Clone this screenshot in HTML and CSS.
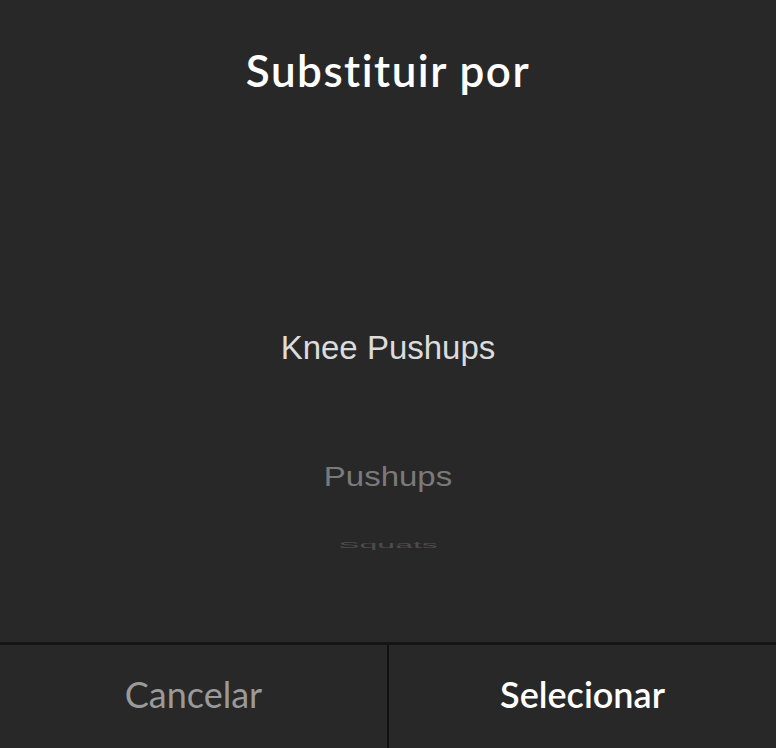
FILE: index.html
```html
<!DOCTYPE html>
<html lang="en">
<head>
    <meta charset="UTF-8">
    <title>Substituir por</title>
    <link rel="stylesheet" href="styles.css">
</head>
<body>
    <div class="sheet">
        <h1 class="title">Substituir por</h1>

        <!-- wheel picker -->
        <div class="picker">
            <div class="item selected">Knee Pushups</div>
            <div class="item next">Pushups</div>
            <div class="item far">Squats</div>
        </div>

        <div class="actions">
            <button class="action cancel">Cancelar</button>
            <button class="action confirm">Selecionar</button>
        </div>
    </div>
</body>
</html>
```

FILE: styles.css
```css
body {
    margin: 0;
    background: #282828;
    font-family: 'Lato', sans-serif;
}
.sheet {
    height: 748px;
    display: flex;
    flex-direction: column;
}
.title {
    margin: 0;
    padding-top: 44px;
    height: 58px;
    font-size: 44px;
    font-weight: 600;
    letter-spacing: 1.5px;
    color: #fff;
    text-align: center;
    line-height: 52px;
}
.picker {
    flex: 1;
    display: flex;
    flex-direction: column;
    align-items: center;
    font-family: 'Liberation Sans', Arial, sans-serif;
    padding-top: 228px;
}
.item {
    font-size: 33px;
    line-height: 36px;
    white-space: nowrap;
}
.selected {
    color: #dcdcdc;
}
.next {
    margin-top: 93px;
    color: #7a7a7a;
    transform: scaleY(0.85);
}
.far {
    margin-top: 32px;
    color: #4c4c4c;
    font-size: 32px;
    transform: scaleY(0.28);
}
.actions {
    display: flex;
    height: 103px;
    border-top: 3px solid #151515;
}
.action {
    flex: 1;
    background: #282828;
    border: none;
    font-family: 'Lato', sans-serif;
    font-size: 36px;
    padding: 0 0 6px;
}
.cancel {
    color: #9a9a9a;
    border-right: 2px solid #111;
}
.confirm {
    color: #fff;
    font-weight: 600;
}
```
